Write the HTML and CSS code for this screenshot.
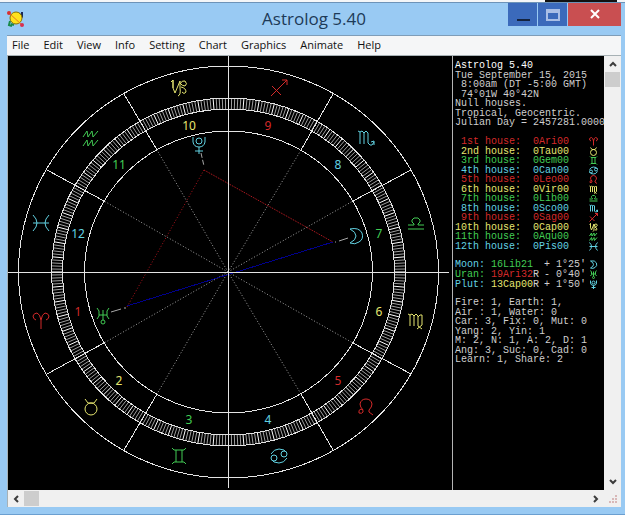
FILE: index.html
```
<!DOCTYPE html>
<html lang="en">
<head>
<meta charset="utf-8">
<title>Astrolog 5.40</title>
<link rel="stylesheet" href="styles.css">
<script src="wheel.js" defer></script>
</head>
<body>
<svg class="defs" aria-hidden="true">
  <symbol id="ari" viewBox="-9 -9 18 18"><path d="M-5 -1Q-8 -2 -8 -5Q-7 -8 -4 -8Q-1 -7 0 -1V8M5 -1Q8 -2 8 -5Q7 -8 4 -8Q1 -7 0 -1"/></symbol>
  <symbol id="tau" viewBox="-9 -9 18 18"><circle cx="0" cy="2" r="6"/><path d="M-6 -8L-3 -4H3L6 -8"/></symbol>
  <symbol id="gem" viewBox="-9 -9 18 18"><path d="M-7 -8L-5 -6H5L7 -8M-7 8L-5 6H5L7 8M-3 -6V6M3 -6V6"/></symbol>
  <symbol id="can" viewBox="-9 -9 18 18"><circle cx="-5" cy="2" r="3"/><circle cx="5" cy="-2" r="3"/><path d="M-8 -2Q-5 -7 0 -7Q6 -7 8 -3M8 2Q5 7 0 7Q-6 7 -8 3"/></symbol>
  <symbol id="leo" viewBox="-9 -9 18 18"><path d="M-7 6Q-8 3 -5 2Q-2 3 -3 5Q-4 7 -7 6M-3 3Q-6 0 -6 -3Q-5 -8 0 -8Q5 -8 6 -3Q6 0 3 3V5L7 8"/></symbol>
  <symbol id="vir" viewBox="-9 -9 18 18"><path d="M-8 -7L-6 -6V5M-6 -6L-4 -7L-2 -5V5M-2 -5L0 -7L2 -5V5L6 8M2 -4L4 -6H6V4L1 8"/></symbol>
  <symbol id="lib" viewBox="-9 -9 18 18"><path d="M-8 5H8M-8 1H-2V0Q-5 -2 -4 -4L-2 -6H2L4 -4Q5 -2 2 0V1H8"/></symbol>
  <symbol id="sco" viewBox="-9 -9 18 18"><path d="M-8 -7L-6 -6V6M-6 -6L-4 -7L-2 -5V6M-2 -5L0 -7L2 -5V5L4 7H6L8 4M5 4L8 3V7"/></symbol>
  <symbol id="sag" viewBox="-9 -9 18 18"><path d="M-8 8L8 -8M3 -8H8V-3M-7 -2L2 7"/></symbol>
  <symbol id="cap" viewBox="-9 -9 18 18"><path d="M-8 -6L-6 -8V0L-4 5L1 -7M-6 0V-8M1 -7V0Q2 7 -1 8M1 -4Q3 -8 6 -7Q9 -4 6 -2Q3 -2 1 -5M2 -1Q7 0 7 4Q5 7 3 4"/></symbol>
  <symbol id="aqu" viewBox="-9 -9 18 18"><path d="M-8 -1L-4 -7L-3 -1L1 -7L2 -1L7 -7M-8 8L-4 2L-3 8L1 2L2 8L7 2"/></symbol>
  <symbol id="pis" viewBox="-9 -9 18 18"><path d="M-8 -8Q0 0 -8 8M8 -8Q0 0 8 8M-8 0H8"/></symbol>
  <symbol id="moon" viewBox="-9 -9 18 18"><path d="M-6 -7Q3 -9 6 -3Q8 3 3 6Q-1 9 -6 7Q0 4 0 0Q0 -4 -6 -7"/></symbol>
  <symbol id="ura" viewBox="-9 -9 18 18"><circle cx="0" cy="6" r="2"/><path d="M0 -6V4M-4 -1H4M-6 -8L-4 -5V0L-6 3M6 -8L4 -5V0L6 3"/></symbol>
  <symbol id="plu" viewBox="-9 -9 18 18"><circle cx="0" cy="-4" r="3"/><path d="M-6 -8V-3Q-5 2 0 2Q5 2 6 -3V-8M0 2V9M-4 6H4"/></symbol>
</svg>

<div class="backdrop"></div>
<main class="window">
  <header class="titlebar">
    <svg class="app-icon" viewBox="0 0 18 18" aria-hidden="true">
      <path d="M3 11L2 15L5 16M4 14L7 15" stroke="#178a4a" stroke-width="2" fill="none"/>
      <path d="M11 3L15 6V2" stroke="#182858" stroke-width="2" fill="none"/>
      <circle cx="9" cy="8" r="6" fill="#ffe21c" stroke="#8a7400"/>
      <path d="M2 3L15 15" stroke="#e87820" stroke-width="1" fill="none"/>
      <circle cx="2" cy="3" r="2" fill="#d83030"/><circle cx="15" cy="15" r="2" fill="#d83050"/>
    </svg>
    <h1>Astrolog 5.40</h1>
    <div class="controls">
      <button class="ctl" aria-label="Minimize"><svg viewBox="0 0 14 14"><path d="M1 12H14" stroke="#14233f" stroke-width="2"/></svg></button>
      <button class="ctl" aria-label="Maximize"><svg viewBox="0 0 14 14"><path d="M1 3V12H13V3" fill="none" stroke="#a9bfe6" stroke-width="2"/><path d="M0 3H14" stroke="#a9bfe6" stroke-width="4"/></svg></button>
      <button class="ctl close" aria-label="Close"><svg viewBox="0 0 14 14"><path d="M3 2L11 10M11 2L3 10" stroke="#fff" stroke-width="2"/></svg></button>
    </div>
  </header>
  <nav class="menu">
    <button>File</button><button>Edit</button><button>View</button><button>Info</button><button>Setting</button><button>Chart</button><button>Graphics</button><button>Animate</button><button>Help</button>
  </nav>
  <div class="body">
    <div class="canvas">
      <svg class="wheel" viewBox="8 56 444 434" role="img" aria-label="Chart wheel">
        <path class="dots" d="M228 272L157 394M228 272L104 343M228 272L104 201M228 272L157 150M228 272L301 150M228 272L353 201M228 272L353 343M228 272L301 394"/>
        <path class="trine" d="M127 306L333 242"/>
        <path class="sextile" d="M204 170L333 242"/>
        <path class="square" d="M204 170L127 307"/>
        <path class="degrees" id="degrees"/>
        <path class="degrees fives" id="fives"/>
        <g class="rings">
          <ellipse cx="228.500" cy="272" rx="210" ry="206"/>
          <ellipse cx="228.500" cy="272" rx="177" ry="174"/>
          <ellipse cx="228.500" cy="272" rx="166" ry="163"/>
          <ellipse cx="228.500" cy="272" rx="144" ry="141"/>
          <path d="M8 272.500H449M228.500 56V488"/>
          <path d="M157 150L124 94M104 201L47 170M104 343L47 374M157 394L124 450M301 150L333 94M353 201L411 170M353 343L411 374M301 394L333 450"/>
        </g>
        <g class="ptr"><path d="M339 241L348 238M335 242H336M111 312L121 309M124 308H126"/><path d="M201 153L204 166" stroke-dasharray="5 2"/></g>
        <g class="nums">
          <text class="fire" x="78" y="316">1</text><text class="earth" x="119" y="385">2</text><text class="air" x="189" y="424">3</text>
          <text class="water" x="268" y="424">4</text><text class="fire" x="338" y="385">5</text><text class="earth" x="379" y="316">6</text>
          <text class="air" x="379" y="238">7</text><text class="water" x="338" y="169">8</text><text class="fire" x="268" y="130">9</text>
          <text class="earth" x="189" y="130">10</text><text class="air" x="119" y="169">11</text><text class="water" x="78" y="238">12</text>
        </g>
        <g class="signs">
          <use class="fire" href="#ari" x="32" y="312" width="18" height="18"/><use class="earth" href="#tau" x="82" y="398" width="18" height="18"/>
          <use class="air" href="#gem" x="170" y="447" width="18" height="18"/><use class="water" href="#can" x="270" y="447" width="18" height="18"/>
          <use class="fire" href="#leo" x="357" y="398" width="18" height="18"/><use class="earth" href="#vir" x="407" y="312" width="18" height="18"/>
          <use class="air" href="#lib" x="407" y="215" width="18" height="18"/><use class="water" href="#sco" x="357" y="129" width="18" height="18"/>
          <use class="fire" href="#sag" x="270" y="79" width="18" height="18"/><use class="earth" href="#cap" x="170" y="79" width="18" height="18"/>
          <use class="air" href="#aqu" x="82" y="129" width="18" height="18"/><use class="water" href="#pis" x="32" y="214" width="18" height="18"/>
          <use class="water" href="#moon" x="347" y="227" width="18" height="18"/><use class="air" href="#ura" x="94" y="307" width="18" height="18"/>
          <use class="water" href="#plu" x="190" y="136" width="18" height="18"/>
        </g>
      </svg>
      <aside class="info">
        <div class="lines intro"><span class="name">Astrolog 5.40</span><span>Tue September 15, 2015</span><span> 8:00am (DT -5:00 GMT)</span><span> 74°01W 40°42N</span><span>Null houses.</span><span>Tropical, Geocentric.</span><span>Julian Day = 2457281.0000</span></div>
        <table class="houses">
          <tr class="fire"><th>1st house:</th><td>0Ari00</td><td><svg><use href="#ari"/></svg></td></tr>
          <tr class="earth"><th>2nd house:</th><td>0Tau00</td><td><svg><use href="#tau"/></svg></td></tr>
          <tr class="air"><th>3rd house:</th><td>0Gem00</td><td><svg><use href="#gem"/></svg></td></tr>
          <tr class="water"><th>4th house:</th><td>0Can00</td><td><svg><use href="#can"/></svg></td></tr>
          <tr class="fire"><th>5th house:</th><td>0Leo00</td><td><svg><use href="#leo"/></svg></td></tr>
          <tr class="earth"><th>6th house:</th><td>0Vir00</td><td><svg><use href="#vir"/></svg></td></tr>
          <tr class="air"><th>7th house:</th><td>0Lib00</td><td><svg><use href="#lib"/></svg></td></tr>
          <tr class="water"><th>8th house:</th><td>0Sco00</td><td><svg><use href="#sco"/></svg></td></tr>
          <tr class="fire"><th>9th house:</th><td>0Sag00</td><td><svg><use href="#sag"/></svg></td></tr>
          <tr class="earth"><th>10th house:</th><td>0Cap00</td><td><svg><use href="#cap"/></svg></td></tr>
          <tr class="air"><th>11th house:</th><td>0Aqu00</td><td><svg><use href="#aqu"/></svg></td></tr>
          <tr class="water"><th>12th house:</th><td>0Pis00</td><td><svg><use href="#pis"/></svg></td></tr>
        </table>
        <table class="planets">
          <tr><th class="water">Moon:</th><td><span class="air">16Lib21</span></td><td>+ 1°25'</td><td class="water"><svg><use href="#moon"/></svg></td></tr>
          <tr><th class="air">Uran:</th><td><span class="fire">19Ari32</span>R</td><td>- 0°40'</td><td class="air"><svg><use href="#ura"/></svg></td></tr>
          <tr><th class="water">Plut:</th><td><span class="earth">13Cap00</span>R</td><td>+ 1°50'</td><td class="water"><svg><use href="#plu"/></svg></td></tr>
        </table>
        <div class="lines totals"><span>Fire: 1, Earth: 1,</span><span>Air : 1, Water: 0</span><span>Car: 3, Fix: 0, Mut: 0</span><span>Yang: 2, Yin: 1</span><span>M: 2, N: 1, A: 2, D: 1</span><span>Ang: 3, Suc: 0, Cad: 0</span><span>Learn: 1, Share: 2</span></div>
      </aside>
    </div>
    <div class="bar vertical">
      <button aria-label="Scroll up"><svg viewBox="0 0 8 8"><path d="M1 6L4 3L7 6"/></svg></button>
      <div class="thumb"></div>
      <button class="end" aria-label="Scroll down"><svg viewBox="0 0 8 8"><path d="M1 2L4 5L7 2"/></svg></button>
    </div>
    <div class="bar horizontal">
      <button aria-label="Scroll left"><svg viewBox="0 0 8 8"><path d="M6 1L3 4L6 7"/></svg></button>
      <div class="thumb"></div>
      <button class="end" aria-label="Scroll right"><svg viewBox="0 0 8 8"><path d="M2 1L5 4L2 7"/></svg></button>
    </div>
    <div class="grip"><svg viewBox="0 0 8 8"><path d="M6 0H8V2H6ZM3 3H5V5H3ZM6 3H8V5H6ZM0 6H2V8H0ZM3 6H5V8H3ZM6 6H8V8H6Z"/></svg></div>
  </div>
</main>
</body>
</html>
```
FILE: wheel.js
```
// Degree ring: one tick per degree, every fifth one brighter.
const cx = 228.5, cy = 272;
const inner = [166, 163], outer = [177, 174];
const ticks = { degrees: "", fives: "" };
for (let deg = 0; deg < 360; deg++) {
  const a = deg * Math.PI / 180;
  const point = ([rx, ry]) =>
    (cx + rx * Math.cos(a)).toFixed(1) + " " + (cy - ry * Math.sin(a)).toFixed(1);
  ticks[deg % 5 ? "degrees" : "fives"] += "M" + point(inner) + "L" + point(outer);
}
for (const id in ticks) {
  document.getElementById(id).setAttribute("d", ticks[id]);
}
```
FILE: styles.css
```
* { box-sizing: border-box; }
html, body { height: 100%; }
body { margin: 0; display: flex; flex-direction: column; background: #99caf3; font-family: "Open Sans", "Noto Sans", sans-serif; overflow: hidden; }
button { font: inherit; border: 0; margin: 0; padding: 0; background: none; color: inherit; }
.defs { position: absolute; width: 0; height: 0; }
symbol { fill: none; stroke: currentColor; stroke-width: 1px; overflow: visible; }
symbol * { vector-effect: non-scaling-stroke; }

.backdrop { flex: none; height: 2px; background: linear-gradient(#111, #111) right 8px top / 72px 2px no-repeat #f4f6f8; }
.window { flex: 1; min-height: 0; display: flex; flex-direction: column; padding: 0 4px 7px 7px; border-top: 1px solid #6d93b8; border-bottom: 1px solid #6b9fd0; background: #99caf3; }

.titlebar { flex: none; height: 32px; display: grid; grid-template-columns: 1fr auto 1fr; }
.app-icon { width: 18px; height: 18px; margin-top: 7px; }
.titlebar h1 { margin: 0; font-size: 17px; line-height: 32px; font-weight: 400; color: #1d3a58; }
.controls { justify-self: end; display: flex; gap: 1px; height: 23px; }
.ctl { width: 29px; display: grid; place-items: center; background: #3b6abb; }
.ctl svg { width: 14px; height: 14px; }
.ctl.close { width: 53px; background: #c94f51; }

.menu { flex: none; height: 20px; display: flex; gap: 14px; padding-left: 5px; background: #f5f6f7; border-top: 1px solid #7f9db8; font-size: 11px; line-height: 17px; color: #111; }
.menu button { height: 17px; }

.body { flex: 1; min-height: 0; display: grid; grid-template: minmax(0, 1fr) 17px / minmax(0, 1fr) 17px; background: #f0f0f0; border: solid #a7b1b5; border-width: 1px 0 0 1px; }
.canvas { display: flex; min-width: 0; background: #000; }
.wheel { flex: 1; min-width: 0; width: 100%; height: 100%; }
.info { flex: none; width: 152px; padding: 5px 0 0 2px; border-left: 1px solid #b4b4b4; display: flex; flex-direction: column; gap: 9px; overflow: hidden; color: #cfcfcf; font: 10px/9px "Liberation Mono", monospace; white-space: pre; }

.lines { display: grid; grid-auto-rows: 1fr; }
.intro, .totals { height: 67px; }
.name { color: #fff; }
.info table { border-collapse: collapse; font: inherit; }
.info th { padding: 0; font-weight: 400; text-align: left; }
.info td { padding: 0; }
.info td:last-child { padding-right: 6px; text-align: right; }
.info td svg { display: block; width: 9px; height: 9px; margin-left: auto; }
.houses { height: 114px; }
.houses th { width: 66px; text-align: right; }
.houses td:nth-child(2) { padding-left: 12px; }
.planets { height: 29px; }
.planets th { width: 36px; }
.planets td:nth-child(2) { width: 48px; }
.planets td:nth-child(3) { padding-left: 5px; }

.fire { color: #d42a2a; }
.earth { color: #e6e670; }
.air { color: #42cc54; }
.water { color: #62d2e2; }

.rings { fill: none; stroke: #e4e4e4; shape-rendering: crispEdges; }
.degrees { fill: none; stroke: #a0a0a0; }
.fives { stroke: #fff; }
.dots { fill: none; stroke: #a4a4a4; stroke-dasharray: 1 2; }
.trine { stroke: #00008c; shape-rendering: crispEdges; }
.sextile { stroke: #c81c24; stroke-dasharray: 1 1; }
.square { stroke: #b0141c; stroke-dasharray: 1 2; }
.ptr { fill: none; stroke: #a8a8a8; }
.nums text { font: 12px "Noto Sans", sans-serif; text-anchor: middle; fill: currentColor; }

.bar { display: flex; }
.bar button { width: 16px; height: 16px; display: grid; place-items: center; }
.bar svg { width: 8px; height: 8px; fill: none; stroke: #3c3c3c; stroke-width: 2px; }
.thumb { width: 15px; height: 15px; background: #cdcdcd; }
.vertical { flex-direction: column; align-items: center; }
.horizontal { align-items: center; }
.vertical .end { margin-top: auto; }
.horizontal .end { margin-left: auto; }
.grip { display: grid; place-items: center; }
.grip svg { width: 8px; height: 8px; fill: #d8b8b8; }
```
